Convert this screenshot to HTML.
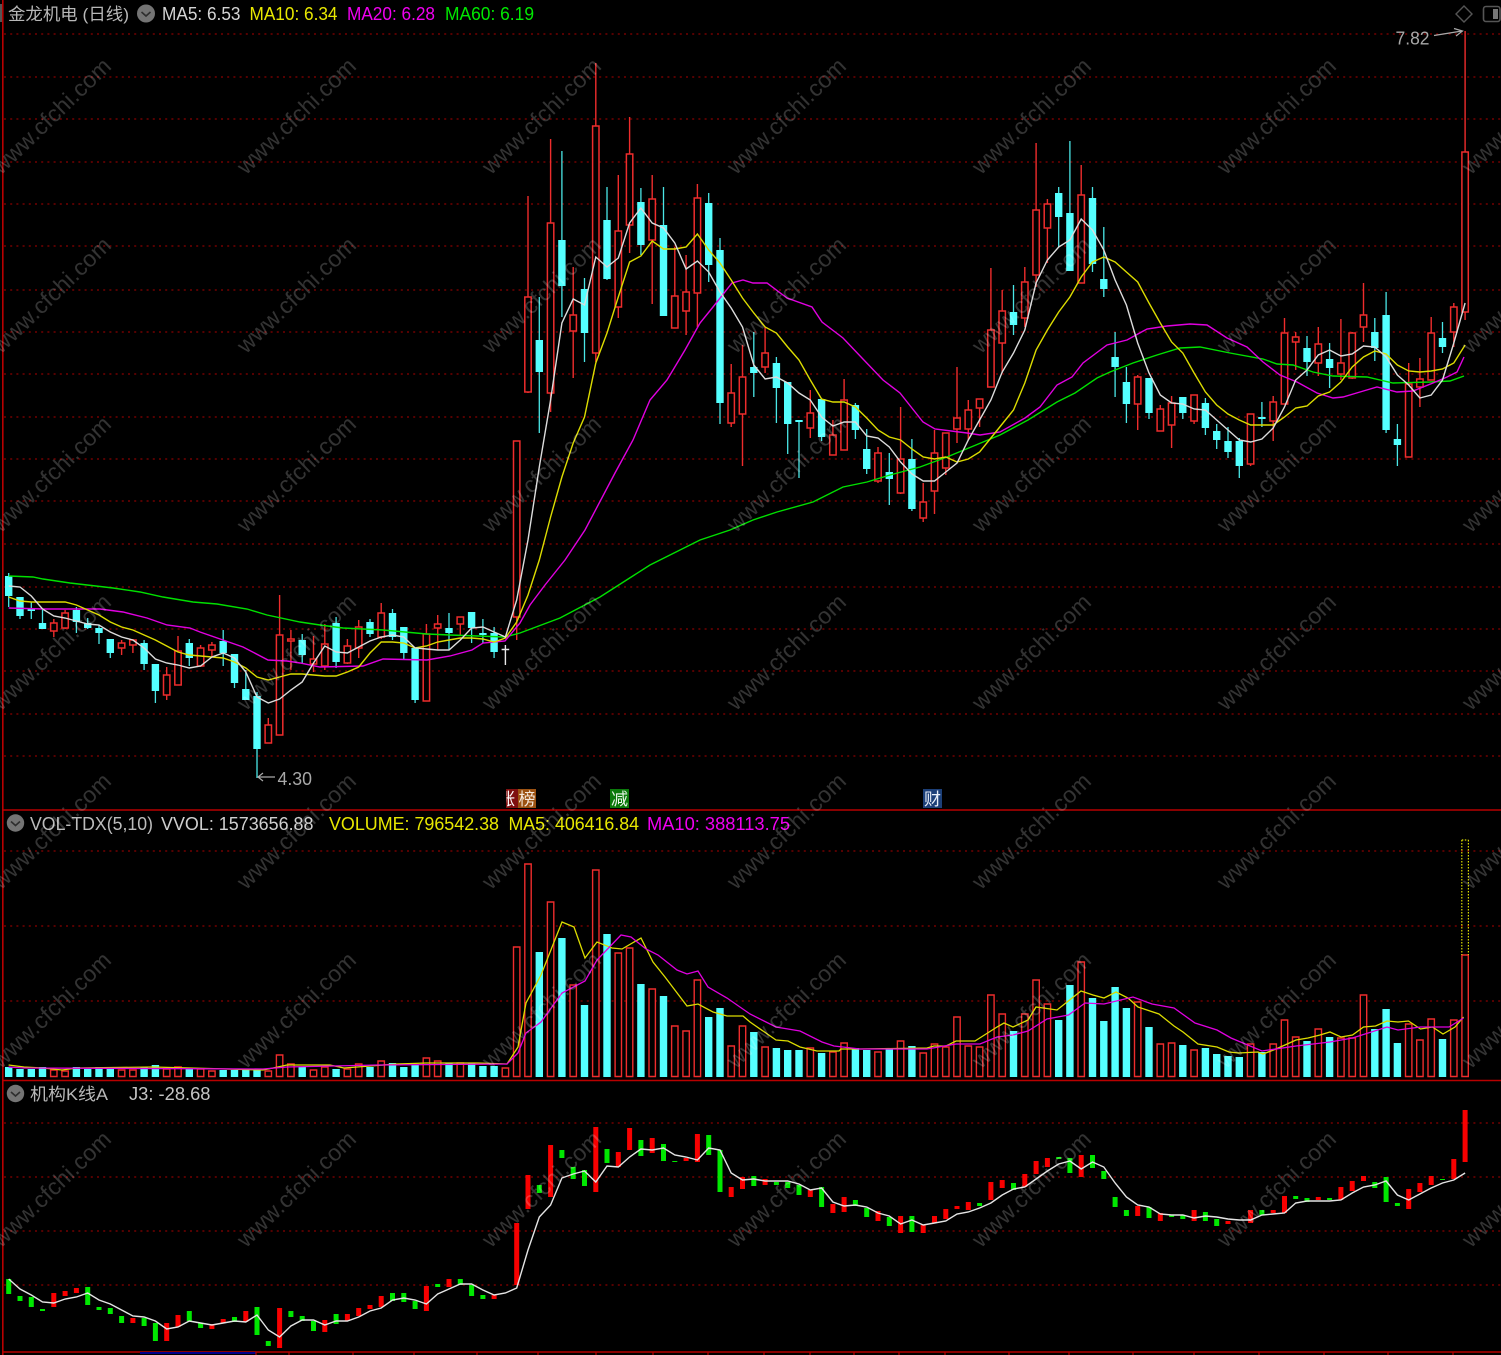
<!DOCTYPE html>
<html lang="zh"><head><meta charset="utf-8"><title>金龙机电 (日线)</title>
<style>html,body{margin:0;padding:0;background:#000;width:1501px;height:1355px;overflow:hidden}svg{display:block;filter:blur(.35px)}
text{font-family:"Liberation Sans","WenQuanYi Zen Hei","Noto Sans CJK SC",sans-serif}
.n{fill:none}.g{stroke:#8a0000;stroke-width:1.3;stroke-dasharray:2 4.2;fill:none}
.t{font-size:18px}.wm text{font-size:23px;fill:#fff;fill-opacity:.2}</style></head><body>
<svg xmlns="http://www.w3.org/2000/svg" width="1501" height="1355" viewBox="0 0 1501 1355">
<rect width="1501" height="1355" fill="#000"/>
<!-- grids -->
<path class="g" d="M4 34H1501M4 77H1501M4 119H1501M4 162H1501M4 204H1501M4 246H1501M4 290H1501M4 332H1501M4 374H1501M4 417H1501M4 459H1501M4 501H1501M4 544H1501M4 587H1501M4 629H1501M4 671H1501M4 714H1501M4 756H1501M4 851H1501M4 926H1501M4 1001H1501M4 1123H1501M4 1177H1501M4 1231H1501M4 1285H1501"/>
<!-- frame -->
<path class="n" stroke="#b80000" stroke-width="1.6" d="M2.8 0V1355M2 810H1501M2 1080.5H1501M2 1352H1501"/>
<path class="n" stroke="#555" stroke-width="2" d="M1 4V22"/>
<path class="n" stroke="#00008b" stroke-width="2" d="M140 1353H256"/>
<path class="n" stroke="#b80000" stroke-width="1.2" d="M256 1352v3M289 1352v3M353 1352v3M414 1352v3M477 1352v3M538 1352v3M596 1352v3M653 1352v3M708 1352v3M764 1352v3M810 1352v3M854 1352v3M899 1352v3M945 1352v3M1009 1352v3M1069 1352v3M1133 1352v3M1194 1352v3M1259 1352v3M1324 1352v3M1388 1352v3M1453 1352v3"/>

<!-- red wicks -->
<path class="n" stroke="#ee2c2c" stroke-width="1.4" d="M53.8 619V637M65.1 610V629M121.6 640V655M132.9 639V653M166.7 667V700M178 636V685M200.6 645V667M211.9 642V657M268.3 718V743M279.6 595V735M290.9 630V670M313.5 636V672M324.8 624V670M347.4 639V664M358.7 620V658M381.2 603V639M426.4 624V701M437.7 615V650M460.3 617V636M516.7 441V640M528 196V393M550.6 139V412M573.2 267V378M595.8 63V362M618.3 175V318M629.6 117V253M652.2 175V304M674.8 247V328M686.1 255V335M697.4 184V327M731.2 364V427M742.5 345V466M765.1 327V373M810.3 390V438M832.9 420V455M844.1 379V450M878 447V483M900.6 407V494M923.2 483V522M934.5 430V514M945.8 433V475M957 367V443M968.3 400V440M979.6 399V427M990.9 268V387M1002.2 290V373M1024.8 267V327M1036.1 143V287M1047.4 199V263M1081.2 165V283M1137.7 375V430M1160.3 405V431M1171.6 396V448M1194.1 395V424M1250.6 414V466M1273.2 396V441M1284.5 318V404M1295.7 332V370M1318.3 327V376M1340.9 319V380M1352.2 332V379M1363.5 283V342M1408.7 363V457M1419.9 358V407M1431.2 317V380M1453.8 303V347M1465.1 31V320"/>
<!-- red bodies -->
<path fill="#000" stroke="#ee2c2c" stroke-width="1.5" d="M50.6 623h6.4V631h-6.4zM61.9 613h6.4V628h-6.4zM118.4 643h6.4V648h-6.4zM129.7 640h6.4V645h-6.4zM163.5 675h6.4V695h-6.4zM174.8 651h6.4V685h-6.4zM197.4 648h6.4V666h-6.4zM208.7 645h6.4V650h-6.4zM265.1 725h6.4V743h-6.4zM276.4 635h6.4V735h-6.4zM287.7 639h6.4V641h-6.4zM310.3 659h6.4V664h-6.4zM321.6 644h6.4V666h-6.4zM344.2 646h6.4V663h-6.4zM355.5 627h6.4V648h-6.4zM378 613h6.4V637h-6.4zM423.2 634h6.4V701h-6.4zM434.5 624h6.4V628h-6.4zM457.1 617h6.4V624h-6.4zM513.5 441h6.4V617h-6.4zM524.8 297h6.4V392h-6.4zM547.4 223h6.4V393h-6.4zM570 315h6.4V331h-6.4zM592.6 126h6.4V353h-6.4zM615.1 231h6.4V307h-6.4zM626.4 154h6.4V225h-6.4zM649 199h6.4V240h-6.4zM671.6 296h6.4V328h-6.4zM682.9 292h6.4V311h-6.4zM694.2 198h6.4V293h-6.4zM728 393h6.4V423h-6.4zM739.3 377h6.4V414h-6.4zM761.9 353h6.4V367h-6.4zM807.1 413h6.4V428h-6.4zM829.7 435h6.4V455h-6.4zM840.9 400h6.4V450h-6.4zM874.8 453h6.4V481h-6.4zM897.4 459h6.4V493h-6.4zM920 502h6.4V518h-6.4zM931.3 453h6.4V491h-6.4zM942.6 433h6.4V468h-6.4zM953.8 418h6.4V429h-6.4zM965.1 410h6.4V429h-6.4zM976.4 399h6.4V408h-6.4zM987.7 330h6.4V387h-6.4zM999 311h6.4V343h-6.4zM1021.6 282h6.4V318h-6.4zM1032.9 210h6.4V275h-6.4zM1044.2 204h6.4V228h-6.4zM1078 195h6.4V283h-6.4zM1134.5 377h6.4V404h-6.4zM1157.1 409h6.4V431h-6.4zM1168.4 403h6.4V425h-6.4zM1190.9 395h6.4V421h-6.4zM1247.4 414h6.4V464h-6.4zM1270 402h6.4V421h-6.4zM1281.3 333h6.4V404h-6.4zM1292.5 337h6.4V342h-6.4zM1315.1 344h6.4V363h-6.4zM1337.7 363h6.4V374h-6.4zM1349 333h6.4V378h-6.4zM1360.3 315h6.4V327h-6.4zM1405.5 384h6.4V457h-6.4zM1416.7 379h6.4V387h-6.4zM1428 333h6.4V380h-6.4zM1450.6 307h6.4V332h-6.4zM1461.9 152h6.4V312h-6.4z"/>
<!-- cyan wicks -->
<path class="n" stroke="#4ae6e6" stroke-width="1.3" d="M8.7 573V607M20 597V619M31.3 602V619M42.5 610V629M76.4 607V633M87.7 618V629M99 625V644M110.3 639V658M144.1 640V670M155.4 664V703M189.3 639V666M223.2 630V666M234.5 654V688M245.8 670V700M257 692V778M302.2 634V663M336.1 617V668M370 619V637M392.5 609V640M403.8 627V659M415.1 648V703M449 613V650M471.6 612V643M482.9 619V643M494.1 627V658M539.3 297V433M561.9 151V317M584.5 278V362M607 187V280M640.9 188V255M663.5 187V316M708.7 193V282M720 238V424M753.8 332V397M776.4 357V423M787.7 382V454M799 420V478M821.6 399V441M855.4 403V439M866.7 429V474M889.3 453V505M911.9 439V511M1013.5 285V335M1058.7 187V247M1069.9 141V271M1092.5 187V272M1103.8 227V297M1115.1 332V397M1126.4 367V423M1149 378V419M1182.8 397V419M1205.4 398V435M1216.7 424V449M1228 427V458M1239.3 438V478M1261.9 402V427M1307 336V376M1329.6 343V388M1374.8 318V361M1386.1 292V433M1397.4 424V466M1442.5 322V353"/>
<!-- cyan bodies -->
<path class="n" stroke="#54ffff" stroke-width="7.4" d="M8.7 576V596M20 597V616M31.3 609V611M42.5 623V629M76.4 610V622M87.7 623V628M99 628V633M110.3 639V653M144.1 643V664M155.4 664V691M189.3 643V658M223.2 641V653M234.5 654V683M245.8 689V700M257 696V749M302.2 640V655M336.1 623V662M370 622V634M392.5 613V637M403.8 627V653M415.1 648V700M449 628V633M471.6 612V628M482.9 633V635M494.1 633V652M539.3 340V372M561.9 240V286M584.5 289V333M607 220V279M640.9 202V245M663.5 225V316M708.7 203V265M720 250V403M753.8 367V373M776.4 363V388M787.7 382V424M799 420V422M821.6 399V437M855.4 405V430M866.7 449V469M889.3 472V479M911.9 459V509M1013.5 312V325M1058.7 193V217M1069.9 213V271M1092.5 198V264M1103.8 279V289M1115.1 357V367M1126.4 382V404M1149 378V413M1182.8 397V413M1205.4 403V428M1216.7 431V440M1228 441V452M1239.3 441V466M1261.9 417V419M1307 348V362M1329.6 359V368M1374.8 332V348M1386.1 315V430M1397.4 439V445M1442.5 338V347"/>
<path class="n" stroke="#e8e8e8" stroke-width="1.4" d="M505.4 645V665M501.6 649.5H509.2"/>

<!-- MA lines main -->
<polyline class="n" stroke="#00e000" stroke-width="1.4" points="8.7,576 33,577 43,579 70,583 113,588 140,592 163,597 193,602 217,604 247,609 267,615 300,622 320,625 343,628 383,630 427,634 450,635 505,637 520,633 560,618 600,597 650,565 700,540 730,530 753,520 777,512 813,502 843,487 867,482 890,475 920,467 947,457 1000,435 1028,420 1057,402 1075,393 1097,378 1110,372 1133,363 1157,355 1180,348 1200,347 1230,353 1263,359 1277,364 1293,365 1313,372 1333,376 1367,377 1393,383 1430,382 1450,381 1464,376"/>
<polyline class="n" stroke="#e000e0" stroke-width="1.4" points="8.7,608 43,609 100,609 123,612 147,618 167,625 190,628 200,632 223,640 243,647 268,660 287,661 300,663 320,667 363,666 383,659 427,660 450,656 472,650 483,643 505,641 520,623 530,605 545,585 565,560 585,530 615,473 633,440 650,400 667,380 685,350 700,323 713,307 732,283 743,280 753,283 767,283 787,298 812,307 822,322 843,338 862,358 883,380 900,393 923,422 935,429 967,433 980,435 1000,432 1025,418 1040,407 1057,385 1072,377 1083,363 1107,345 1127,340 1147,329 1167,326 1190,324 1207,325 1227,338 1247,347 1263,362 1280,375 1297,382 1317,393 1333,398 1343,397 1360,392 1377,387 1397,392 1413,391 1433,383 1447,377 1457,372 1464,357"/>
<polyline class="n" stroke="#dcdc00" stroke-width="1.4" points="8.7,597 20,601 31.3,602 42.5,602 65.1,602 76.4,605 87.7,610 99,615 110.3,622 121.6,627 132.9,630 144.1,635 155.4,640 166.7,646 178,652 189.3,655 200.6,656 211.9,657 223.2,658 234.5,662 245.8,668 257,677 268.3,680 279.6,677 290.9,674 302.2,674 313.5,675 324.8,676 336.1,676 347.4,672 358.7,667 370,653 381.2,642 392.5,642 403.8,643 415.1,648 426.4,646 437.7,642 449,640 460.3,638 471.6,638 482.9,639 494.1,642 505.4,638 516.7,622 528,595 539.3,560 550.6,517 561.9,477 573.2,443 584.5,417 595.8,363 607,333 618.3,297 629.6,262 640.9,256 652.2,241 663.5,249 674.8,249 686.1,247 697.4,234 708.7,250 720,263 731.2,280 742.5,298 753.8,313 765.1,327 776.4,333 787.7,347 799,360 810.3,380 821.6,399 832.9,402 844.1,402 855.4,407 866.7,418 878,430 889.3,437 900.6,440 911.9,449 923.2,457 934.5,459 945.8,457 957,462 968.3,459 979.6,452 990.9,438 1002.2,424 1013.5,410 1024.8,383 1036.1,350 1047.4,330 1058.7,312 1069.9,297 1081.2,277 1092.5,262 1103.8,257 1115.1,262 1126.4,272 1137.7,282 1149,303 1160.3,323 1171.6,342 1182.8,353 1194.1,373 1205.4,392 1216.7,405 1228,414 1239.3,420 1250.6,425 1261.9,425 1273.2,425 1284.5,417 1295.7,408 1307,406 1318.3,396 1329.6,392 1340.9,382 1352.2,367 1363.5,357 1374.8,351 1386.1,354 1397.4,365 1408.7,371 1419.9,372 1431.2,371 1442.5,369 1453.8,363 1465.1,345"/>
<polyline class="n" stroke="#dcdcdc" stroke-width="1.4" points="8.7,586 20,587 31.3,596 42.5,609 53.8,616 65.1,618 76.4,621 87.7,624 99,625 110.3,632 121.6,637 132.9,640 144.1,648 155.4,659 166.7,663 178,665 189.3,668 200.6,666 211.9,657 223.2,653 234.5,658 245.8,672 257,697 268.3,703 279.6,699 290.9,690 302.2,682 313.5,663 324.8,646 336.1,652 347.4,653 358.7,647 370,641 381.2,637 392.5,635 403.8,637 415.1,648 426.4,649 437.7,650 449,650 460.3,640 471.6,628 482.9,627 494.1,632 505.4,637 516.7,600 528,540 539.3,467 550.6,400 561.9,323 573.2,299 584.5,305 595.8,257 607,267 618.3,258 629.6,223 640.9,208 652.2,223 663.5,228 674.8,243 686.1,269 697.4,261 708.7,272 720,292 731.2,308 742.5,327 753.8,365 765.1,379 776.4,377 787.7,383 799,393 810.3,400 821.6,417 832.9,426 844.1,422 855.4,422 866.7,436 878,438 889.3,447 900.6,462 911.9,474 923.2,481 934.5,481 945.8,472 957,463 968.3,440 979.6,420 990.9,400 1002.2,372 1013.5,353 1024.8,330 1036.1,283 1047.4,260 1058.7,247 1069.9,240 1081.2,219 1092.5,230 1103.8,250 1115.1,280 1126.4,305 1137.7,343 1149,373 1160.3,395 1171.6,403 1182.8,404 1194.1,409 1205.4,410 1216.7,420 1228,430 1239.3,440 1250.6,442 1261.9,439 1273.2,428 1284.5,407 1295.7,380 1307,370 1318.3,355 1329.6,350 1340.9,356 1352.2,354 1363.5,346 1374.8,347 1386.1,357 1397.4,375 1408.7,385 1419.9,398 1431.2,395 1442.5,380 1453.8,343 1465.1,303"/>

<!-- min / max labels -->
<path class="n" stroke="#aaa" stroke-width="1.2" d="M258 777H275M263 773l-5 4 5 4"/>
<text x="277.5" y="785" fill="#a8a8a8" font-size="18" textLength="34.5" lengthAdjust="spacingAndGlyphs">4.30</text>
<text x="1395.5" y="44.5" fill="#a8a8a8" font-size="18" textLength="34" lengthAdjust="spacingAndGlyphs">7.82</text>
<path class="n" stroke="#aaa" stroke-width="1.2" d="M1434 35.5L1462 31M1454 28.5l8.5 2.5-6.5 5"/>

<!-- top right icons -->
<path class="n" stroke="#555" stroke-width="1.4" d="M1464 6l8 8-8 8-8-8z"/>
<rect x="1483.5" y="6.5" width="16.5" height="15" rx="2.5" fill="none" stroke="#555" stroke-width="1.6"/>
<rect x="1493" y="9" width="5" height="10" fill="#777"/>

<!-- flags -->
<defs><clipPath id="fl"><rect x="506" y="789" width="12" height="19"/></clipPath></defs>
<rect x="506" y="789" width="12" height="19" fill="#7f1010"/>
<rect x="518" y="789" width="18" height="19" fill="#9c5212"/>
<text x="498" y="805" fill="#fff" font-size="17" clip-path="url(#fl)">涨</text>
<text x="518.5" y="805" fill="#f4e8dc" font-size="17">榜</text>
<rect x="610" y="789" width="19" height="19" fill="#0b7a0b"/>
<text x="611" y="805" fill="#e8f4e8" font-size="17">减</text>
<rect x="923" y="789" width="19" height="19" fill="#1c3f78"/>
<text x="924" y="805" fill="#e8eef8" font-size="17">财</text>

<!-- volume red -->
<path fill="#000" stroke="#ee2c2c" stroke-width="1.4" d="M50.6 1070h6.4V1076.5h-6.4zM61.9 1071h6.4V1076.5h-6.4zM118.4 1070h6.4V1076.5h-6.4zM129.7 1070h6.4V1076.5h-6.4zM163.5 1069h6.4V1076.5h-6.4zM174.8 1067h6.4V1076.5h-6.4zM197.4 1069h6.4V1076.5h-6.4zM208.7 1071h6.4V1076.5h-6.4zM265.1 1071h6.4V1076.5h-6.4zM276.4 1055h6.4V1076.5h-6.4zM287.7 1064h6.4V1076.5h-6.4zM310.3 1070h6.4V1076.5h-6.4zM321.6 1067h6.4V1076.5h-6.4zM344.2 1069h6.4V1076.5h-6.4zM355.5 1064h6.4V1076.5h-6.4zM378 1061h6.4V1076.5h-6.4zM423.2 1058h6.4V1076.5h-6.4zM434.5 1061h6.4V1076.5h-6.4zM457.1 1063h6.4V1076.5h-6.4zM502.2 1068h6.4V1076.5h-6.4zM513.5 947h6.4V1076.5h-6.4zM524.8 864h6.4V1076.5h-6.4zM547.4 902h6.4V1076.5h-6.4zM570 985h6.4V1076.5h-6.4zM592.6 870h6.4V1076.5h-6.4zM615.1 953h6.4V1076.5h-6.4zM626.4 948h6.4V1076.5h-6.4zM649 989h6.4V1076.5h-6.4zM671.6 1026h6.4V1076.5h-6.4zM682.9 1031h6.4V1076.5h-6.4zM694.2 980h6.4V1076.5h-6.4zM728 1046h6.4V1076.5h-6.4zM739.3 1026h6.4V1076.5h-6.4zM761.9 1047h6.4V1076.5h-6.4zM807.1 1048h6.4V1076.5h-6.4zM829.7 1052h6.4V1076.5h-6.4zM840.9 1043h6.4V1076.5h-6.4zM874.8 1052h6.4V1076.5h-6.4zM897.4 1041h6.4V1076.5h-6.4zM920 1053h6.4V1076.5h-6.4zM931.3 1044h6.4V1076.5h-6.4zM942.6 1047h6.4V1076.5h-6.4zM953.8 1017h6.4V1076.5h-6.4zM965.1 1046h6.4V1076.5h-6.4zM976.4 1047h6.4V1076.5h-6.4zM987.7 995h6.4V1076.5h-6.4zM999 1014h6.4V1076.5h-6.4zM1021.6 1014h6.4V1076.5h-6.4zM1032.9 980h6.4V1076.5h-6.4zM1044.2 1004h6.4V1076.5h-6.4zM1078 962h6.4V1076.5h-6.4zM1134.5 1002h6.4V1076.5h-6.4zM1157.1 1044h6.4V1076.5h-6.4zM1168.4 1043h6.4V1076.5h-6.4zM1190.9 1050h6.4V1076.5h-6.4zM1247.4 1044h6.4V1076.5h-6.4zM1270 1044h6.4V1076.5h-6.4zM1281.3 1020h6.4V1076.5h-6.4zM1292.5 1037h6.4V1076.5h-6.4zM1315.1 1029h6.4V1076.5h-6.4zM1337.7 1038h6.4V1076.5h-6.4zM1349 1038h6.4V1076.5h-6.4zM1360.3 995h6.4V1076.5h-6.4zM1405.5 1024h6.4V1076.5h-6.4zM1416.7 1040h6.4V1076.5h-6.4zM1428 1019h6.4V1076.5h-6.4zM1450.6 1020h6.4V1076.5h-6.4zM1461.9 955h6.4V1076.5h-6.4z"/>
<!-- volume cyan -->
<path class="n" stroke="#54ffff" stroke-width="7.4" d="M8.7 1067V1077M20 1069V1077M31.3 1069V1077M42.5 1067V1077M76.4 1067V1077M87.7 1069V1077M99 1067V1077M110.3 1067V1077M144.1 1067V1077M155.4 1065V1077M189.3 1069V1077M223.2 1070V1077M234.5 1070V1077M245.8 1070V1077M257 1069V1077M302.2 1067V1077M336.1 1069V1077M370 1067V1077M392.5 1063V1077M403.8 1067V1077M415.1 1065V1077M449 1063V1077M471.6 1063V1077M482.9 1066V1077M494.1 1066V1077M539.3 952V1077M561.9 938V1077M584.5 1005V1077M607 934V1077M640.9 984V1077M663.5 996V1077M708.7 1017V1077M720 1008V1077M753.8 1032V1077M776.4 1048V1077M787.7 1050V1077M799 1050V1077M821.6 1053V1077M855.4 1048V1077M866.7 1050V1077M889.3 1049V1077M911.9 1046V1077M1013.5 1031V1077M1058.7 1020V1077M1069.9 985V1077M1092.5 998V1077M1103.8 1021V1077M1115.1 987V1077M1126.4 1008V1077M1149 1027V1077M1182.8 1045V1077M1205.4 1048V1077M1216.7 1054V1077M1228 1056V1077M1239.3 1057V1077M1261.9 1052V1077M1307 1041V1077M1329.6 1037V1077M1374.8 1029V1077M1386.1 1009V1077M1397.4 1043V1077M1442.5 1039V1077"/>
<!-- dotted yellow spike -->
<path class="n" stroke="#dcdc00" stroke-width="1.2" stroke-dasharray="1.5 1.5" d="M1461.8 840V955M1468.4 840V955M1461.8 840H1468.4"/>
<!-- volume MAs -->
<polyline class="n" stroke="#dcdc00" stroke-width="1.3" points="8.6,1065 24,1067 43,1068 62,1070 77,1068 153,1067 263,1070 273,1068 287,1065 330,1065 344,1068 397,1064 426,1063 478,1063 507,1064 518,1047 526,1003 541,975 562,922 574,927 585,958 597,942 612,948 622,949 641,938 653,962 665,977 687,1006 698,1004 713,1012 727,1016 743,1016 750,1022 776,1040 788,1041 800,1047 817,1051 839,1051 841,1049 860,1049 927,1048 934,1046 946,1046 956,1041 975,1041 997,1027 1004,1023 1013,1027 1028,1020 1036,1007 1057,1010 1081,991 1093,995 1104,998 1116,992 1128,998 1138,1007 1159,1014 1174,1026 1183,1032 1198,1044 1217,1047 1229,1052 1238.5,1053 1258,1052 1263,1054 1273.5,1050 1285,1045 1296,1040 1308,1038 1320,1035 1330,1032 1341,1037 1352.5,1035 1363.5,1027 1375.5,1026 1387,1021 1398,1022 1408.5,1021 1420.5,1029 1432.5,1027 1443,1034 1455,1027 1463.6,1017"/>
<polyline class="n" stroke="#e000e0" stroke-width="1.3" points="8.6,1067 24,1068 263,1069 287,1067 378,1065 507,1064 518,1053 526,1033 541,1022 562,993 585,981 597,960 621,935 631,937 646,949 658,955 677,970 687,974 698,971 708,987 727,998 750,1014 776,1027 800,1031 822,1042 834,1046 860,1049 927,1049 956,1044 980,1044 997,1037 1013,1035 1028,1031 1047,1019 1068.5,1015 1085,1003 1104,1004 1133,997 1152,1004 1174,1008 1195,1023 1217,1030 1231,1038 1262,1051 1296,1046 1330,1042 1352.5,1038 1387,1027 1398,1030 1420.5,1027 1449,1027 1463.6,1018"/>

<!-- J3 red -->
<path class="n" stroke="#f80000" stroke-width="5" d="M53.8 1293V1307M65.1 1291V1296M76.4 1288V1293M132.9 1318V1323M166.7 1323V1341M178 1315V1327M211.9 1324V1329M223.2 1319V1323M245.8 1311V1322M279.6 1308V1348M324.8 1320V1332M347.4 1314V1321M358.7 1308V1316M370 1305V1309M381.2 1296V1307M426.4 1286V1311M449 1279V1287M494.1 1295V1299M516.7 1223V1285M528 1175V1209M550.6 1145V1197M595.8 1127V1192M618.3 1152V1167M629.6 1128V1150M652.2 1138V1153M686.1 1158V1161M697.4 1134V1162M731.2 1187V1197M742.5 1177V1189M765.1 1179V1185M810.3 1190V1197M832.9 1204V1213M844.1 1197V1212M878 1211V1221M900.6 1216V1233M923.2 1225V1233M934.5 1216V1223M945.8 1209V1219M957 1206V1209M968.3 1202V1210M990.9 1182V1200M1002.2 1180V1188M1024.8 1174V1187M1036.1 1161V1174M1047.4 1158V1167M1081.2 1155V1177M1137.7 1206V1216M1160.3 1213V1221M1194.1 1210V1221M1228 1221V1224M1250.6 1210V1223M1273.2 1210V1213M1284.5 1196V1213M1318.3 1197V1200M1340.9 1187V1200M1352.2 1181V1191M1363.5 1176V1181M1408.7 1189V1209M1419.9 1183V1192M1431.2 1176V1185M1453.8 1159V1179M1465.1 1110V1162"/>
<!-- J3 green -->
<path class="n" stroke="#00e800" stroke-width="5" d="M8.7 1279V1294M20 1296V1301M31.3 1297V1307M42.5 1309V1311M87.7 1287V1305M99 1307V1310M110.3 1308V1314M121.6 1316V1323M144.1 1318V1326M155.4 1323V1341M189.3 1311V1321M200.6 1323V1328M234.5 1317V1322M257 1307V1335M268.3 1341V1346M290.9 1311V1317M302.2 1316V1321M313.5 1321V1331M336.1 1314V1324M392.5 1293V1301M403.8 1293V1302M415.1 1301V1309M437.7 1284V1287M460.3 1279V1285M471.6 1285V1296M482.9 1295V1299M539.3 1185V1193M561.9 1150V1158M573.2 1167V1179M584.5 1170V1186M607 1149V1163M640.9 1140V1156M663.5 1144V1161M674.8 1161V1162M708.7 1135V1155M720 1150V1192M753.8 1176V1186M776.4 1182V1185M787.7 1182V1188M799 1185V1195M821.6 1187V1207M855.4 1200V1206M866.7 1208V1217M889.3 1217V1226M911.9 1216V1232M979.6 1203V1206M1013.5 1183V1190M1058.7 1157V1159M1069.9 1158V1173M1092.5 1155V1168M1103.8 1171V1179M1115.1 1197V1207M1126.4 1210V1216M1149 1207V1218M1171.6 1215V1217M1182.8 1215V1219M1205.4 1212V1221M1216.7 1219V1226M1261.9 1210V1215M1295.7 1196V1199M1307 1198V1202M1329.6 1198V1200M1374.8 1182V1188M1386.1 1177V1202M1397.4 1203V1206M1442.5 1179V1180"/>
<polyline class="n" stroke="#e4e4e4" stroke-width="1.4" points="8.7,1279 20,1289 31.3,1295 42.5,1302 53.8,1303 65.1,1299 76.4,1297 87.7,1293 99,1300 110.3,1304 121.6,1310 132.9,1316 144.1,1317 155.4,1321 166.7,1329 178,1327 189.3,1321 200.6,1323 211.9,1325 223.2,1323 234.5,1321 245.8,1322 257,1315 268.3,1330 279.6,1337 290.9,1326 302.2,1320 313.5,1320 324.8,1325 336.1,1321 347.4,1321 358.7,1317 370,1311 381.2,1308 392.5,1300 403.8,1298 415.1,1300 426.4,1304 437.7,1294 449,1289 460.3,1284 471.6,1284 482.9,1290 494.1,1295 505.4,1293 516.7,1288 528,1250 539.3,1217 550.6,1205 561.9,1178 573.2,1174 584.5,1171 595.8,1182 607,1166 618.3,1167 629.6,1157 640.9,1149 652.2,1150 663.5,1148 674.8,1155 686.1,1157 697.4,1160 708.7,1148 720,1150 731.2,1173 742.5,1180 753.8,1179 765.1,1181 776.4,1181 787.7,1181 799,1184 810.3,1190 821.6,1188 832.9,1202 844.1,1206 855.4,1205 866.7,1207 878,1213 889.3,1216 900.6,1224 911.9,1220 923.2,1225 934.5,1223 945.8,1221 957,1214 968.3,1212 979.6,1208 990.9,1203 1002.2,1195 1013.5,1189 1024.8,1187 1036.1,1179 1047.4,1171 1058.7,1164 1069.9,1161 1081.2,1169 1092.5,1162 1103.8,1167 1115.1,1183 1126.4,1197 1137.7,1205 1149,1207 1160.3,1214 1171.6,1215 1182.8,1215 1194.1,1218 1205.4,1216 1216.7,1217 1228,1219 1239.3,1220 1250.6,1220 1261.9,1215 1273.2,1214 1284.5,1213 1295.7,1203 1307,1201 1318.3,1201 1329.6,1201 1340.9,1200 1352.2,1193 1363.5,1187 1374.8,1185 1386.1,1181 1397.4,1195 1408.7,1200 1419.9,1194 1431.2,1188 1442.5,1183 1453.8,1180 1465.1,1173"/>

<!-- headers -->
<text x="8" y="20" fill="#b8b8b8" font-size="17" textLength="121" lengthAdjust="spacingAndGlyphs">金龙机电 (日线)</text>
<circle cx="146" cy="13.5" r="9" fill="#747474"/><path class="n" stroke="#2e2e2e" stroke-width="1.6" d="M141.5 12l4.5 4 4.5-4"/>
<text class="t" x="162" y="20" fill="#d4d4d4" textLength="78.5" lengthAdjust="spacingAndGlyphs">MA5: 6.53</text>
<text class="t" x="249.5" y="20" fill="#e8e800" textLength="88" lengthAdjust="spacingAndGlyphs">MA10: 6.34</text>
<text class="t" x="347" y="20" fill="#f000f0" textLength="88" lengthAdjust="spacingAndGlyphs">MA20: 6.28</text>
<text class="t" x="445" y="20" fill="#00e800" textLength="89" lengthAdjust="spacingAndGlyphs">MA60: 6.19</text>

<circle cx="15.5" cy="823" r="8.7" fill="#747474"/><path class="n" stroke="#2e2e2e" stroke-width="1.6" d="M11 821.5l4.5 4 4.5-4"/>
<text class="t" x="30" y="830" fill="#bcbcbc" textLength="123" lengthAdjust="spacingAndGlyphs">VOL-TDX(5,10)</text>
<text class="t" x="161" y="830" fill="#cfcfcf" textLength="152.5" lengthAdjust="spacingAndGlyphs">VVOL: 1573656.88</text>
<text class="t" x="329" y="830" fill="#e8e800" textLength="170" lengthAdjust="spacingAndGlyphs">VOLUME: 796542.38</text>
<text class="t" x="508.5" y="830" fill="#e8e800" textLength="130.5" lengthAdjust="spacingAndGlyphs">MA5: 406416.84</text>
<text class="t" x="647" y="830" fill="#f000f0" textLength="143" lengthAdjust="spacingAndGlyphs">MA10: 388113.75</text>

<circle cx="15.5" cy="1093.5" r="8.7" fill="#747474"/><path class="n" stroke="#2e2e2e" stroke-width="1.6" d="M11 1092l4.5 4 4.5-4"/>
<text x="30" y="1100" fill="#b8b8b8" font-size="17" textLength="78" lengthAdjust="spacingAndGlyphs">机构K线A</text>
<text class="t" x="129" y="1100" fill="#c4c4c4" textLength="81.5" lengthAdjust="spacingAndGlyphs">J3: -28.68</text>

<!-- watermark -->
<g class="wm" transform="translate(5,-3.5)">
<text transform="translate(-4,179) rotate(-44)" textLength="155">www.cfchi.com</text><text transform="translate(241,179) rotate(-44)" textLength="155">www.cfchi.com</text><text transform="translate(486,179) rotate(-44)" textLength="155">www.cfchi.com</text><text transform="translate(731,179) rotate(-44)" textLength="155">www.cfchi.com</text><text transform="translate(976,179) rotate(-44)" textLength="155">www.cfchi.com</text><text transform="translate(1221,179) rotate(-44)" textLength="155">www.cfchi.com</text><text transform="translate(1466,179) rotate(-44)" textLength="155">www.cfchi.com</text>
<text transform="translate(-4,358) rotate(-44)" textLength="155">www.cfchi.com</text><text transform="translate(241,358) rotate(-44)" textLength="155">www.cfchi.com</text><text transform="translate(486,358) rotate(-44)" textLength="155">www.cfchi.com</text><text transform="translate(731,358) rotate(-44)" textLength="155">www.cfchi.com</text><text transform="translate(976,358) rotate(-44)" textLength="155">www.cfchi.com</text><text transform="translate(1221,358) rotate(-44)" textLength="155">www.cfchi.com</text><text transform="translate(1466,358) rotate(-44)" textLength="155">www.cfchi.com</text>
<text transform="translate(-4,537) rotate(-44)" textLength="155">www.cfchi.com</text><text transform="translate(241,537) rotate(-44)" textLength="155">www.cfchi.com</text><text transform="translate(486,537) rotate(-44)" textLength="155">www.cfchi.com</text><text transform="translate(731,537) rotate(-44)" textLength="155">www.cfchi.com</text><text transform="translate(976,537) rotate(-44)" textLength="155">www.cfchi.com</text><text transform="translate(1221,537) rotate(-44)" textLength="155">www.cfchi.com</text><text transform="translate(1466,537) rotate(-44)" textLength="155">www.cfchi.com</text>
<text transform="translate(-4,715) rotate(-44)" textLength="155">www.cfchi.com</text><text transform="translate(241,715) rotate(-44)" textLength="155">www.cfchi.com</text><text transform="translate(486,715) rotate(-44)" textLength="155">www.cfchi.com</text><text transform="translate(731,715) rotate(-44)" textLength="155">www.cfchi.com</text><text transform="translate(976,715) rotate(-44)" textLength="155">www.cfchi.com</text><text transform="translate(1221,715) rotate(-44)" textLength="155">www.cfchi.com</text><text transform="translate(1466,715) rotate(-44)" textLength="155">www.cfchi.com</text>
<text transform="translate(-4,894) rotate(-44)" textLength="155">www.cfchi.com</text><text transform="translate(241,894) rotate(-44)" textLength="155">www.cfchi.com</text><text transform="translate(486,894) rotate(-44)" textLength="155">www.cfchi.com</text><text transform="translate(731,894) rotate(-44)" textLength="155">www.cfchi.com</text><text transform="translate(976,894) rotate(-44)" textLength="155">www.cfchi.com</text><text transform="translate(1221,894) rotate(-44)" textLength="155">www.cfchi.com</text><text transform="translate(1466,894) rotate(-44)" textLength="155">www.cfchi.com</text>
<text transform="translate(-4,1073) rotate(-44)" textLength="155">www.cfchi.com</text><text transform="translate(241,1073) rotate(-44)" textLength="155">www.cfchi.com</text><text transform="translate(486,1073) rotate(-44)" textLength="155">www.cfchi.com</text><text transform="translate(731,1073) rotate(-44)" textLength="155">www.cfchi.com</text><text transform="translate(976,1073) rotate(-44)" textLength="155">www.cfchi.com</text><text transform="translate(1221,1073) rotate(-44)" textLength="155">www.cfchi.com</text><text transform="translate(1466,1073) rotate(-44)" textLength="155">www.cfchi.com</text>
<text transform="translate(-4,1252) rotate(-44)" textLength="155">www.cfchi.com</text><text transform="translate(241,1252) rotate(-44)" textLength="155">www.cfchi.com</text><text transform="translate(486,1252) rotate(-44)" textLength="155">www.cfchi.com</text><text transform="translate(731,1252) rotate(-44)" textLength="155">www.cfchi.com</text><text transform="translate(976,1252) rotate(-44)" textLength="155">www.cfchi.com</text><text transform="translate(1221,1252) rotate(-44)" textLength="155">www.cfchi.com</text><text transform="translate(1466,1252) rotate(-44)" textLength="155">www.cfchi.com</text>
</g>
</svg>
</body></html>
